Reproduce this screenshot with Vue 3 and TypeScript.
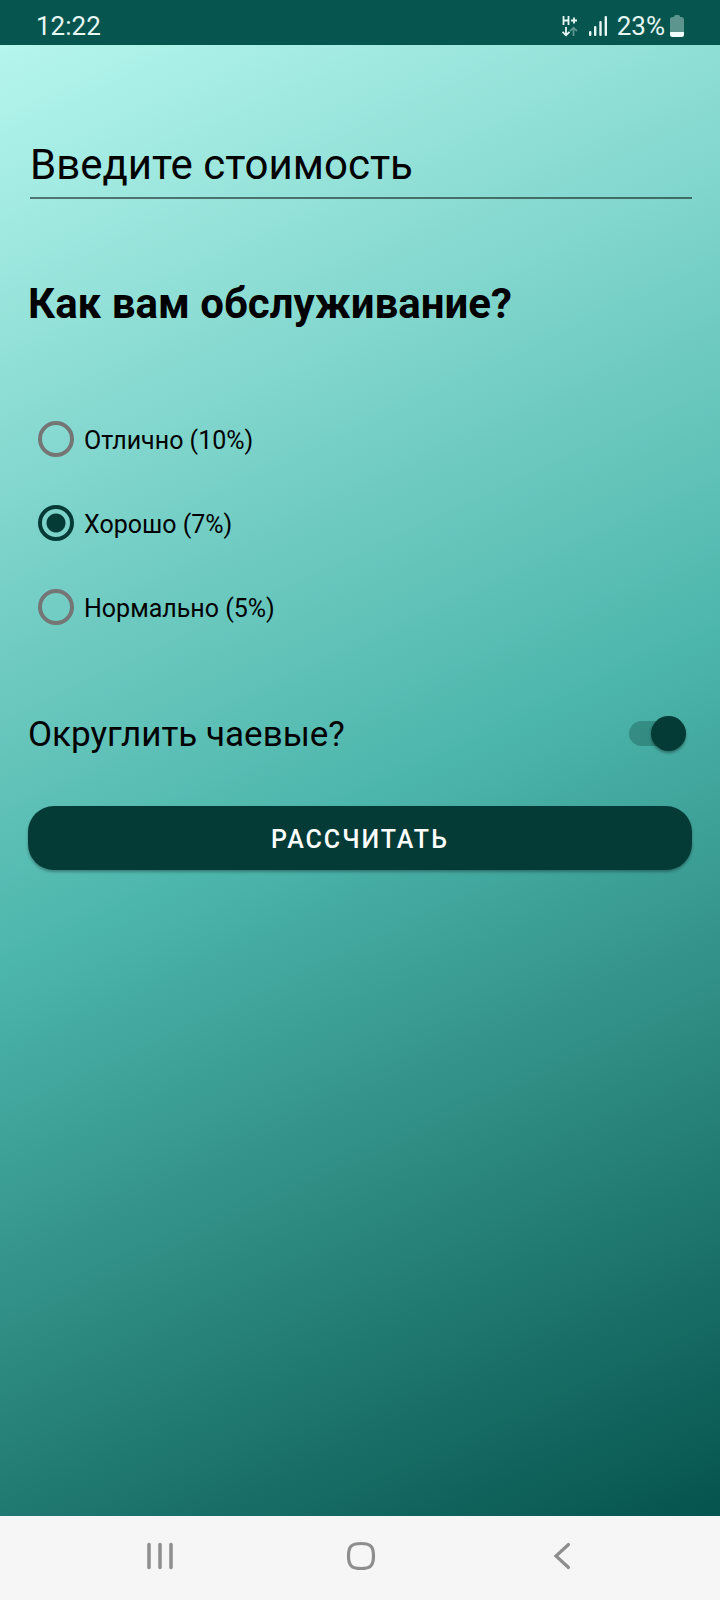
<script setup lang="ts">
import { ref } from 'vue'

interface Rating {
  id: string
  label: string
  percent: number
}

const ratings: Rating[] = [
  { id: 'excellent', label: 'Отлично (10%)', percent: 10 },
  { id: 'good', label: 'Хорошо (7%)', percent: 7 },
  { id: 'normal', label: 'Нормально (5%)', percent: 5 },
]

const cost = ref('')
const percent = ref(7)
const roundUp = ref(true)
const tip = ref(0)

function calculate(): void {
  const value = (Number(cost.value.replace(',', '.')) || 0) * (percent.value / 100)
  tip.value = roundUp.value ? Math.ceil(value) : value
}
</script>

<template>
  <div class="screen">
    <header class="status">
      <time class="clock">12:22</time>
      <div class="indicators">
        <svg class="network" width="16" height="22" viewBox="0 0 16 22" fill="none" aria-hidden="true">
          <path d="M1.5 1v9M6.5 1v9M1.5 5.5h5M9 5.5h6M12 2.5v6" stroke="#e6f7f4" stroke-width="1.8" />
          <path d="M4 12v8M0.5 16.8L4 20.2l3.5-3.4" stroke="#e6f7f4" stroke-width="1.8" />
          <path d="M11.5 21v-8M8 16.2l3.5-3.4 3.5 3.4" stroke="#5b958e" stroke-width="1.8" />
        </svg>
        <svg class="signal" width="20" height="20" viewBox="0 0 20 20" fill="#e6f7f4" aria-hidden="true">
          <rect x="1" y="15" width="2.4" height="5" rx="1" />
          <rect x="6" y="10" width="2.4" height="10" rx="1" />
          <rect x="11.3" y="5" width="2.4" height="15" rx="1" />
          <rect x="16.6" y="0" width="2.4" height="20" rx="1" />
        </svg>
        <span class="charge">23%</span>
        <svg class="battery" width="14" height="22" viewBox="0 0 14 22" aria-hidden="true">
          <path d="M4 2V1.5Q4 0 5.5 0h3Q10 0 10 1.5V2h1.5Q14 2 14 4.5V17H0V4.5Q0 2 2.5 2z" fill="#5b958e" />
          <path d="M0 17h14v2.5Q14 22 11.5 22h-9Q0 22 0 19.5z" fill="#f1fffc" />
        </svg>
      </div>
    </header>

    <main>
      <form class="form" @submit.prevent="calculate">
        <input
          v-model="cost"
          class="cost"
          type="text"
          inputmode="decimal"
          placeholder="Введите стоимость"
          aria-label="Введите стоимость"
        />

        <fieldset class="service">
          <legend>Как вам обслуживание?</legend>
          <label v-for="r in ratings" :key="r.id" class="option" :for="r.id">
            <input :id="r.id" v-model="percent" type="radio" name="service" :value="r.percent" />
            <span>{{ r.label }}</span>
          </label>
        </fieldset>

        <label class="round" for="round">
          <span>Округлить чаевые?</span>
          <input id="round" v-model="roundUp" type="checkbox" role="switch" />
        </label>

        <button class="submit" type="submit">РАССЧИТАТЬ</button>
      </form>
    </main>

    <nav class="system">
      <button type="button" aria-label="Недавние">
        <svg width="28" height="28" viewBox="0 0 28 28" stroke="#8e8e8e" stroke-width="3.5" stroke-linecap="round">
          <path d="M3 2.5v23M14 2.5v23M25 2.5v23" />
        </svg>
      </button>
      <button type="button" aria-label="Домой">
        <svg width="30" height="30" viewBox="0 0 30 30" fill="none" stroke="#8e8e8e" stroke-width="3.2">
          <path d="M15 2.5C24.5 2.5 27.5 5.5 27.5 15S24.5 27.5 15 27.5 2.5 24.5 2.5 15 5.5 2.5 15 2.5z" />
        </svg>
      </button>
      <button type="button" aria-label="Назад">
        <svg width="28" height="28" viewBox="0 0 28 28" fill="none" stroke="#8e8e8e" stroke-width="3.2" stroke-linecap="round">
          <path d="M20.5 2.5L8 14 20.5 25.5" />
        </svg>
      </button>
    </nav>
  </div>
</template>

<style>
body {
  margin: 0;
}
</style>

<style scoped>
.screen {
  display: flex;
  flex-direction: column;
  min-height: 100vh;
  font-family: Roboto, "Noto Sans", sans-serif;
  color: #000;
}

.status {
  box-sizing: border-box;
  display: flex;
  justify-content: space-between;
  align-items: center;
  height: 45px;
  padding: 6px 36px 0;
  background: #06564f;
  color: #e6f7f4;
  font-size: 26px;
  line-height: 32px;
}

.indicators {
  display: flex;
  align-items: center;
}

.signal {
  margin: 0 9px 0 10px;
}

.battery {
  margin-left: 5px;
}

main {
  flex: 1;
  background: linear-gradient(155deg, #b5f6ee 0%, #4db6ac 51%, #05544d 100%);
}

.form {
  display: flex;
  flex-direction: column;
  padding: 86px 28px 0;
}

.cost {
  height: 66px;
  margin-left: 2px;
  padding: 0;
  border: 0;
  border-bottom: 2px solid rgba(0, 0, 0, 0.5);
  border-radius: 0;
  outline: 0;
  background: transparent;
  color: #000;
  font: 400 42px/48px Roboto, "Noto Sans", sans-serif;
}

.cost::placeholder {
  color: #000;
  opacity: 1;
}

.service {
  display: flex;
  flex-direction: column;
  min-width: 0;
  margin: 80px 0 0;
  padding: 0;
  border: 0;
}

legend {
  margin-bottom: 68px;
  padding: 0;
  font-size: 42px;
  font-weight: 700;
  line-height: 50px;
}

.option {
  display: flex;
  align-items: center;
  gap: 10px;
  height: 84px;
  padding-left: 10px;
  font-size: 25px;
  line-height: 32px;
}

.option span,
.round span {
  padding-top: 4px;
}

.option input {
  flex: none;
  box-sizing: border-box;
  width: 36px;
  height: 36px;
  margin: 0;
  appearance: none;
  border: 4px solid #757575;
  border-radius: 50%;
}

.option input:checked {
  border-color: #053b36;
  background: radial-gradient(circle, #053b36 9px, transparent 10px);
}

.round {
  display: flex;
  justify-content: space-between;
  align-items: center;
  height: 84px;
  margin-top: 42px;
  padding-right: 6px;
  font-size: 35px;
  line-height: 42px;
}

.round input {
  position: relative;
  width: 57px;
  height: 25px;
  margin: 0;
  appearance: none;
  border-radius: 13px;
  background: rgba(5, 59, 54, 0.3);
}

.round input::before {
  content: "";
  position: absolute;
  top: -5px;
  left: 0;
  width: 35px;
  height: 35px;
  border-radius: 50%;
  background: #ececec;
  box-shadow: 0 2px 3px rgba(0, 0, 0, 0.35);
}

.round input:checked::before {
  right: 0;
  left: auto;
  background: #053b36;
}

.submit {
  height: 64px;
  margin-top: 31px;
  padding-top: 4px;
  border: 0;
  border-radius: 26px;
  background: #053b36;
  box-shadow: 0 2px 3px rgba(0, 0, 0, 0.3);
  color: #fff;
  font: 500 25px/32px Roboto, "Noto Sans", sans-serif;
  letter-spacing: 2px;
}

.system {
  box-sizing: border-box;
  display: flex;
  justify-content: center;
  align-items: center;
  height: 84px;
  padding: 0 0 4px 2px;
  background: #f6f6f6;
}

.system button {
  display: flex;
  justify-content: center;
  flex: 0 0 28%;
  padding: 0;
  border: 0;
  background: none;
}
</style>
